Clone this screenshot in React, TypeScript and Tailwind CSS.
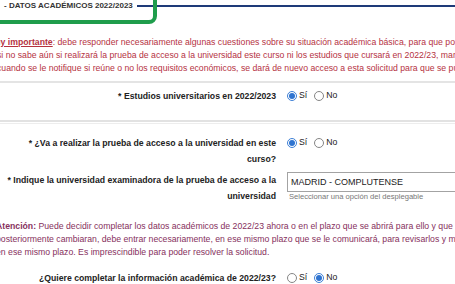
import React from 'react';

const Radio = ({ checked, label }: { checked?: boolean; label: string }) => (
  <span className="flex items-center">
    <span
      className={`w-[10px] h-[10px] rounded-full border flex items-center justify-center bg-white ${
        checked ? 'border-[#3d7fd6]' : 'border-[#858585]'
      }`}
    >
      {checked && <span className="w-[6px] h-[6px] rounded-full bg-[#2f74d0]" />}
    </span>
    <span className="ml-[2px]">{label}</span>
  </span>
);

const YesNo = ({ yes }: { yes: boolean }) => (
  <div className="h-[16px] flex items-center gap-[7px] text-[8.7px] text-[#222]">
    <Radio checked={yes} label="Sí" />
    <Radio checked={!yes} label="No" />
  </div>
);

const Row = ({ label, children, className = '' }: { label: React.ReactNode; children: React.ReactNode; className?: string }) => (
  <div className={`grid grid-cols-[276px_1fr] ${className}`}>
    <div className="text-right font-bold whitespace-nowrap text-[8.7px] leading-[16px] text-[#222]">{label}</div>
    <div className="pl-[11px]">{children}</div>
  </div>
);

export default function App() {
  return (
    <div className="w-[455px] h-[284px] overflow-hidden bg-white relative font-['Liberation_Sans',Arial,sans-serif]">
      {/* fieldset legend */}
      <div className="h-[12px] flex items-center">
        <span className="pl-[4px] text-[8px] font-bold text-[#333] whitespace-nowrap">- DATOS ACADÉMICOS 2022/2023</span>
        <span className="flex-1 ml-[4px] h-[1.5px] bg-[#1e3a78]" />
      </div>
      {/* green highlight */}
      <div className="absolute left-[-12px] top-[-12px] w-[169px] h-[36px] border-4 border-[#1f9d4c] rounded-[8px]" />

      {/* aviso */}
      <div className="mt-[24px] -ml-[3px] text-[8.7px] leading-[13px] text-[#b5323f] whitespace-nowrap">
        <div className="-ml-[9px]">
          <span className="font-bold underline">Muy importante</span>: debe responder necesariamente algunas cuestiones sobre su situación académica básica, para que podamos valorar su solicitud.
        </div>
        <div>si no sabe aún si realizará la prueba de acceso a la universidad este curso ni los estudios que cursará en 2022/23, marque la opción correspondiente</div>
        <div>cuando se le notifique si reúne o no los requisitos económicos, se dará de nuevo acceso a esta solicitud para que se pueda completar</div>
      </div>

      <div className="mt-[6px] h-[2px] bg-[#e4e4e4]" />

      <Row label="* Estudios universitarios en 2022/2023" className="pt-[5px] pb-[16px]">
        <YesNo yes />
      </Row>

      <div className="h-[2px] bg-[#e2e2e2]" />
      <div className="mt-[1px] h-[1px] bg-[#ededed]" />

      <Row
        className="mt-[11px]"
        label={
          <>
            * ¿Va a realizar la prueba de acceso a la universidad en este
            <br />
            curso?
          </>
        }
      >
        <YesNo yes />
      </Row>

      <Row
        className="mt-[5px]"
        label={
          <>
            * Indique la universidad examinadora de la prueba de acceso a la
            <br />
            universidad
          </>
        }
      >
        <div className="w-[220px] h-[20px] border border-[#a3a3a3] bg-white px-[3px] text-[9px] leading-[18px] text-[#222] whitespace-nowrap">
          MADRID - COMPLUTENSE
        </div>
        <div className="pl-[2px] text-[7.6px] leading-[10px] text-[#777] whitespace-nowrap">
          Seleccionar una opción del desplegable
        </div>
      </Row>

      {/* atención */}
      <div className="mt-[16px] -ml-[4px] text-[8.7px] leading-[13px] text-[#86305d] whitespace-nowrap">
        <div>
          <span className="font-bold">Atención:</span> Puede decidir completar los datos académicos de 2022/23 ahora o en el plazo que se abrirá para ello y que se le comunicará.
        </div>
        <div>posteriormente cambiaran, debe entrar necesariamente, en ese mismo plazo que se le comunicará, para revisarlos y modificarlos</div>
        <div>en ese mismo plazo. Es imprescindible para poder resolver la solicitud.</div>
      </div>

      <Row label="¿Quiere completar la información académica de 2022/23?" className="mt-[11px]">
        <YesNo yes={false} />
      </Row>
    </div>
  );
}
